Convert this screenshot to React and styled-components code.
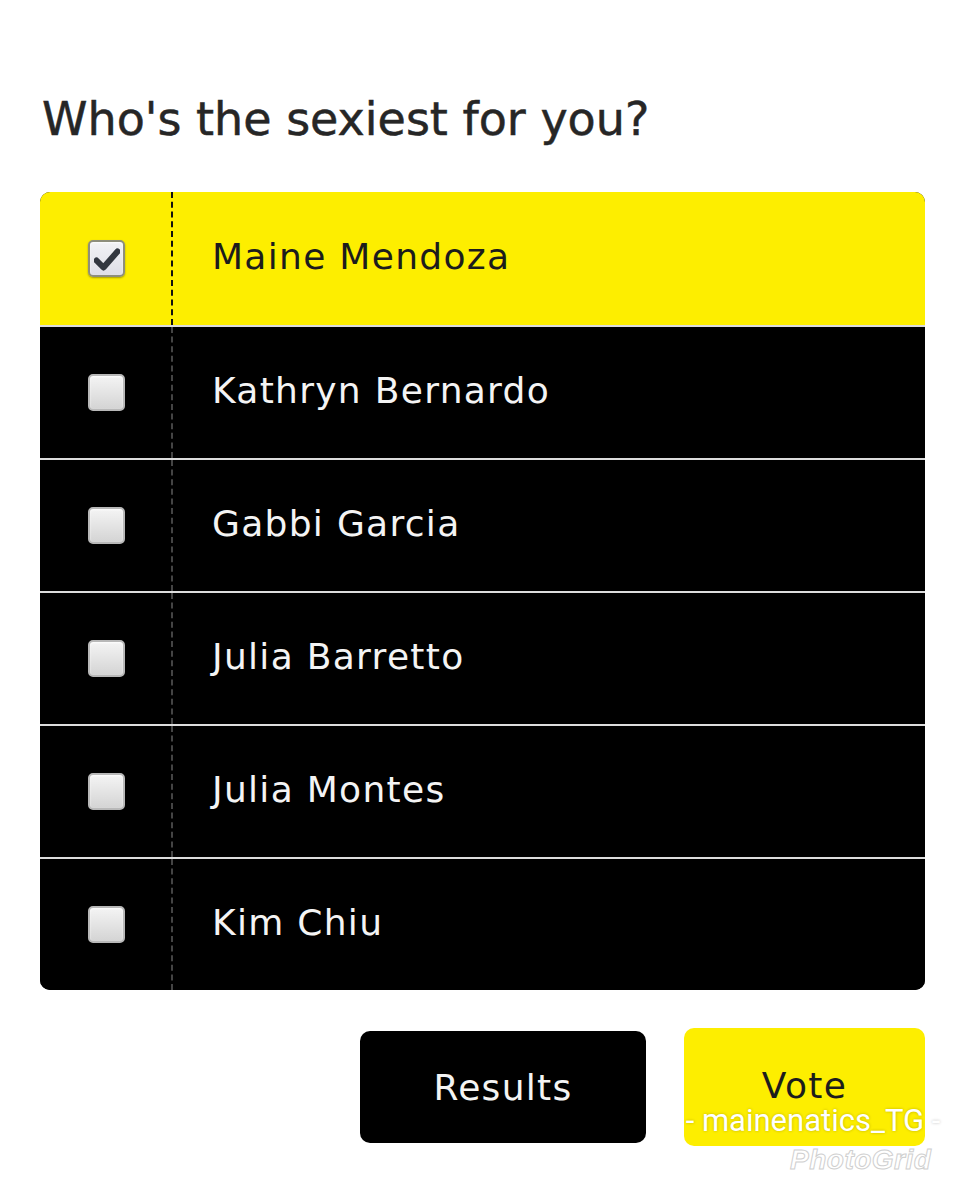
import React, { useState } from "react"
import styled, { createGlobalStyle } from "styled-components"

const GlobalStyle = createGlobalStyle`
    body {
        margin: 0;
        background: #ffffff;
        font-family: "DejaVu Sans", "Liberation Sans", sans-serif;
    }
`

const Page = styled.div`
    width: 965px;
    height: 1200px;
    box-sizing: border-box;
    padding: 88px 40px 0 40px;
    position: relative;
    overflow: hidden;
`

const Title = styled.h1`
    margin: 0 0 0 2px;
    font-size: 46px;
    line-height: 62px;
    font-weight: normal;
    color: #262626;
    letter-spacing: 0;
    -webkit-text-stroke: 0.5px #262626;
`

const Poll = styled.div`
    margin-top: 42px;
    border-radius: 10px;
    overflow: hidden;
    background: #000;
`

const Row = styled.label`
    display: grid;
    grid-template-columns: 133px 1fr;
    height: 131px;
    background: ${p => (p.$selected ? "#fdee00" : "#000")};
    color: ${p => (p.$selected ? "#1c1c1c" : "#f4f4f4")};
    & + & {
        border-top: 2px solid #dcdcdc;
    }
    &:first-child {
        height: 133px;
    }
    cursor: pointer;
`

const BoxCell = styled.div`
    display: flex;
    align-items: center;
    justify-content: center;
    padding-left: 2px;
    border-right: 2px dashed ${p => (p.$selected ? "#111" : "#444")};
`

const Box = styled.span`
    width: 33px;
    height: 33px;
    border-radius: 5px;
    border: 2px solid ${p => (p.$checked ? "#8e8e7c" : "#b8b8b8")};
    background: ${p =>
        p.$checked
            ? "linear-gradient(#f2f2f6, #dedee6)"
            : "linear-gradient(#f4f4f4, #d4d4d4)"};
    box-shadow: inset 0 1px 2px rgba(255, 255, 255, 0.9),
        0 1px 2px rgba(0, 0, 0, 0.35);
    display: flex;
    align-items: center;
    justify-content: center;
`

const Name = styled.div`
    display: flex;
    align-items: center;
    padding-left: 39px;
    font-size: 36px;
    letter-spacing: 1.3px;
    padding-bottom: 4px;
`

const Actions = styled.div`
    display: flex;
    justify-content: flex-end;
    align-items: center;
    gap: 38px;
    margin-top: 38px;
`

const Button = styled.button`
    font-family: inherit;
    font-size: 36px;
    letter-spacing: 1.3px;
    border: none;
    border-radius: 10px;
    width: ${p => p.$w}px;
    height: ${p => p.$h}px;
    padding-bottom: ${p => (p.$primary ? 4 : 0)}px;
    background: ${p => (p.$primary ? "#fdee00" : "#000")};
    color: ${p => (p.$primary ? "#1c1c1c" : "#f4f4f4")};
    cursor: pointer;
`

const Watermark = styled.div`
    position: absolute;
    left: 682px;
    top: 1106px;
    width: 262px;
    text-align: center;
    font-family: "Roboto", "Liberation Sans", sans-serif;
    font-size: 31px;
    line-height: 30px;
    color: #ffffff;
    text-shadow: 0 0 3px rgba(0, 0, 0, 0.25);
    white-space: nowrap;
`

const Brand = styled.div`
    position: absolute;
    left: 790px;
    top: 1144px;
    font-family: "Liberation Sans", sans-serif;
    font-style: italic;
    font-weight: bold;
    font-size: 28px;
    color: #ffffff;
    -webkit-text-stroke: 1px #cfcfcf;
    letter-spacing: 0.5px;
`

const Check = () => (
    <svg width="26" height="24" viewBox="0 0 26 24">
        <path
            d="M2.5 13.5 L9.5 20.5 L23.5 4.5"
            fill="none"
            stroke="#32363f"
            strokeWidth="6"
            strokeLinecap="round"
            strokeLinejoin="round"
        />
    </svg>
)

const candidates = [
    "Maine Mendoza",
    "Kathryn Bernardo",
    "Gabbi Garcia",
    "Julia Barretto",
    "Julia Montes",
    "Kim Chiu",
]

const App = () => {
    const [picked, setPicked] = useState(0)

    return (
        <Page>
            <GlobalStyle />
            <Title>Who's the sexiest for you?</Title>
            <Poll>
                {candidates.map((name, i) => (
                    <Row
                        key={name}
                        $selected={picked === i}
                        onClick={() => setPicked(i)}
                    >
                        <BoxCell $selected={picked === i}>
                            <Box $checked={picked === i}>
                                {picked === i && <Check />}
                            </Box>
                        </BoxCell>
                        <Name>{name}</Name>
                    </Row>
                ))}
            </Poll>
            <Actions>
                <Button $w={286} $h={112}>
                    Results
                </Button>
                <Button $primary $w={241} $h={118}>
                    Vote
                </Button>
            </Actions>
            <Watermark>- mainenatics_TG -</Watermark>
            <Brand>PhotoGrid</Brand>
        </Page>
    )
}

export default App
